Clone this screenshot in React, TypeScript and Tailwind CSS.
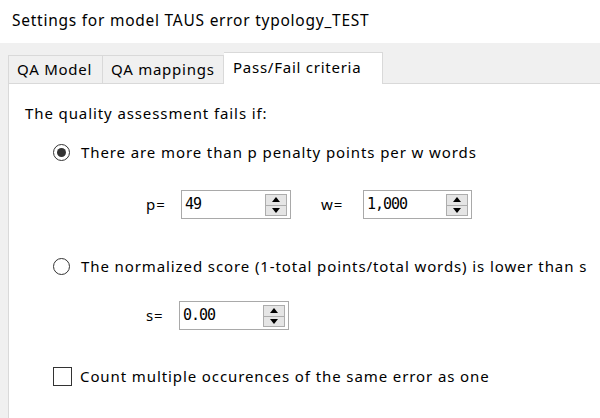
import type { ReactNode } from 'react'

const font = { fontFamily: '"Noto Sans", "Noto Sans CJK JP", sans-serif' }

function Spin({ value, width }: { value: string; width: string }) {
  return (
    <div className={`relative flex h-[29px] items-center border border-[#a9a9a9] bg-white pl-[3px] ${width}`}>
      <span className="text-[15px] leading-none tracking-[-1px]" style={{ fontFamily: '"DejaVu Sans Mono", monospace' }}>
        {value}
      </span>
      <div className="absolute right-[3px] top-[3px] flex h-[22px] w-[22px] flex-col border border-[#adadad] bg-[#e5e5e5]">
        <div className="flex flex-1 items-center justify-center border-b border-[#adadad]">
          <svg width="8" height="5" viewBox="0 0 8 5">
            <path d="M0 5 L4 0 L8 5 Z" fill="#000" />
          </svg>
        </div>
        <div className="flex flex-1 items-center justify-center">
          <svg width="8" height="5" viewBox="0 0 8 5">
            <path d="M0 0 L4 5 L8 0 Z" fill="#000" />
          </svg>
        </div>
      </div>
    </div>
  )
}

function Radio({ checked, children }: { checked?: boolean; children: ReactNode }) {
  return (
    <div className="flex items-center">
      <div className="ml-[44px] flex h-[17px] w-[17px] items-center justify-center rounded-full border border-[#333] bg-white">
        {checked && <div className="h-[9px] w-[9px] rounded-full bg-[#333]" />}
      </div>
      <span className="ml-[11px] whitespace-nowrap">{children}</span>
    </div>
  )
}

export default function App() {
  return (
    <div className="h-[418px] w-[600px] overflow-hidden bg-[#f0f0f0] text-[15px] tracking-[0.9px] text-black" style={font}>
      <div className="flex h-[43px] items-center bg-white pl-[12px] pb-[2px] text-[15.5px] tracking-[0.75px]">
        Settings for model TAUS error typology_TEST
      </div>

      <div className="flex h-[40px] items-end pl-[8px] tracking-[0.75px]">
        <div className="flex h-[28px] w-[95px] items-center border border-b-0 border-[#d9d9d9] pl-[8px]">QA Model</div>
        <div className="flex h-[28px] w-[121px] items-center border border-b-0 border-l-0 border-[#d9d9d9] pl-[8px]">QA mappings</div>
        <div className="relative top-[1px] flex h-[32px] w-[159px] items-center border border-b-0 border-l-0 border-[#d9d9d9] bg-white pl-[9px] pb-[3px]">
          Pass/Fail criteria
        </div>
      </div>

      <div className="ml-[8px] h-[400px] border-l border-t border-[#d9d9d9] bg-white">
        <div className="pl-[16px] pt-[19px] leading-[20px]">The quality assessment fails if:</div>

        <div className="mt-[19px] leading-[20px]">
          <Radio checked>There are more than p penalty points per w words</Radio>
        </div>

        <div className="mt-[28px] flex items-center">
          <span className="ml-[137px] w-[35px]">p=</span>
          <Spin value="49" width="w-[110px]" />
          <span className="ml-[30px] w-[42px]">w=</span>
          <Spin value="1,000" width="w-[109px]" />
        </div>

        <div className="mt-[37px] leading-[20px]">
          <Radio>The normalized score (1-total points/total words) is lower than s</Radio>
        </div>

        <div className="mt-[25px] flex items-center">
          <span className="ml-[137px] w-[33px]">s=</span>
          <Spin value="0.00" width="w-[110px]" />
        </div>

        <div className="mt-[36px] flex items-center">
          <div className="ml-[44px] h-[19px] w-[19px] border border-[#333] bg-white" />
          <span className="ml-[8px] whitespace-nowrap leading-[20px]">Count multiple occurences of the same error as one</span>
        </div>
      </div>
    </div>
  )
}
